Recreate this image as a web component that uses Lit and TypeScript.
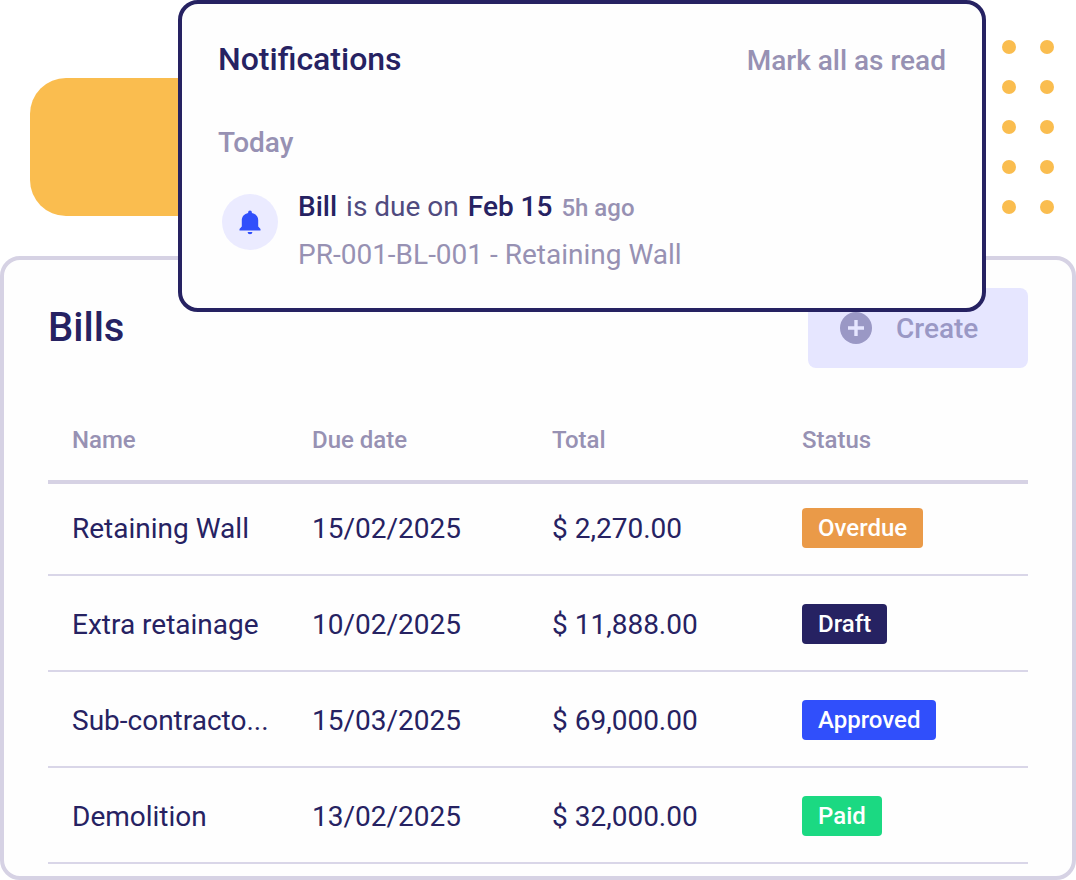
import { LitElement, html, css, svg } from "lit";
import { customElement, property } from "lit/decorators.js";

interface Bill {
  name: string;
  due: string;
  total: string;
  status: "Overdue" | "Draft" | "Approved" | "Paid";
}

const BILLS: Bill[] = [
  { name: "Retaining Wall", due: "15/02/2025", total: "$ 2,270.00", status: "Overdue" },
  { name: "Extra retainage", due: "10/02/2025", total: "$ 11,888.00", status: "Draft" },
  { name: "Sub-contracto...", due: "15/03/2025", total: "$ 69,000.00", status: "Approved" },
  { name: "Demolition", due: "13/02/2025", total: "$ 32,000.00", status: "Paid" },
];

const bell = svg`<path d="M11 0.5a1.9 1.9 0 0 1 1.900 1.900v0.500c3.800 0.800 6.300 3.600 6.300 7.200v6.400l2.300 2.400v1.600H0.500v-1.600L2.800 16.500v-6.400c0-3.600 2.500-6.400 6.300-7.200v-0.500A1.900 1.900 0 0 1 11 0.500zM8.600 22h4.800a2.400 2.200 0 0 1-4.800 0z"/>`;

@customElement("status-badge")
export class StatusBadge extends LitElement {
  @property() status = "";

  static styles = css`
    :host {
      display: inline-block;
      vertical-align: middle;
    }
    .badge {
      display: block;
      padding: 0 16px;
      border-radius: 4px;
      font-size: 24px;
      font-weight: 500;
      line-height: 40px;
      color: #ffffff;
    }
    .overdue { background: #ea9a48; }
    .draft { background: #262262; }
    .approved { background: #304ffb; }
    .paid { background: #1bd982; }
  `;

  render() {
    return html`<span class="badge ${this.status.toLowerCase()}">${this.status}</span>`;
  }
}

@customElement("notification-card")
export class NotificationCard extends LitElement {
  static styles = css`
    :host {
      display: block;
    }
    .card {
      padding: 36px 36px 29px;
      border: 4px solid #262262;
      border-radius: 20px;
      background: #fefefe;
      color: #262262;
      font-size: 28px;
    }
    .head {
      display: flex;
      align-items: baseline;
      justify-content: space-between;
      height: 40px;
      line-height: 38px;
    }
    .title {
      margin: 0;
      font-size: 32px;
      font-weight: 500;
    }
    .mark {
      padding: 0;
      border: 0;
      background: none;
      font: inherit;
      font-weight: 500;
      color: #9791b3;
      cursor: pointer;
    }
    .day {
      margin: 43px 0 20px;
      font-size: 28px;
      font-weight: 500;
      line-height: 40px;
      color: #9791b3;
    }
    .item {
      display: flex;
      gap: 20px;
      padding-left: 4px;
    }
    .icon {
      display: grid;
      place-items: center;
      flex: none;
      width: 56px;
      height: 56px;
      margin-top: 11px;
      border-radius: 50%;
      background: #ebebff;
    }
    .icon svg {
      width: 22px;
      height: 25px;
      fill: #304ffb;
    }
    .line {
      display: flex;
      align-items: baseline;
      gap: 9px;
      height: 48px;
      margin: 0;
      line-height: 48px;
      color: #504b7f;
    }
    .line strong {
      font-weight: 500;
      color: #262262;
    }
    .ago {
      font-size: 24px;
      font-weight: 500;
      line-height: 40px;
      color: #9791b3;
    }
    .ref {
      color: #9791b3;
    }
  `;

  render() {
    return html`
      <section class="card" aria-labelledby="title">
        <header class="head">
          <h2 class="title" id="title">Notifications</h2>
          <button class="mark" type="button">Mark all as read</button>
        </header>
        <h3 class="day">Today</h3>
        <div class="item">
          <span class="icon">
            <svg viewBox="0 0 22 25" aria-hidden="true">${bell}</svg>
          </span>
          <div>
            <p class="line">
              <strong>Bill</strong> is due on <strong>Feb 15</strong>
              <span class="ago">5h ago</span>
            </p>
            <p class="line ref">PR-001-BL-001 - Retaining Wall</p>
          </div>
        </div>
      </section>
    `;
  }
}

@customElement("bills-panel")
export class BillsPanel extends LitElement {
  static styles = css`
    :host {
      display: block;
    }
    .panel {
      padding: 28px 44px 12px;
      border: 4px solid #d6d2e4;
      border-radius: 20px;
      background: #fefefe;
      color: #262262;
    }
    .head {
      display: flex;
      align-items: center;
      justify-content: space-between;
      margin-bottom: 32px;
    }
    .title {
      margin: 0;
      font-size: 40px;
      font-weight: 500;
      line-height: 48px;
    }
    .create {
      display: flex;
      align-items: center;
      gap: 24px;
      min-width: 220px;
      height: 80px;
      padding: 0 48px 0 32px;
      border: 0;
      border-radius: 8px;
      background: #e6e6ff;
      font: inherit;
      font-size: 28px;
      font-weight: 500;
      color: #9a98c5;
      cursor: pointer;
    }
    .create svg {
      width: 32px;
      height: 32px;
    }
    .bills {
      width: 100%;
      table-layout: fixed;
      border-spacing: 0;
      text-align: left;
    }
    .wide {
      width: 250px;
    }
    th,
    td {
      box-sizing: border-box;
      padding: 0 0 0 24px;
      white-space: nowrap;
    }
    th {
      height: 80px;
      font-size: 24px;
      font-weight: 500;
      color: #9791b3;
    }
    td {
      height: 96px;
      font-size: 28px;
      box-shadow: inset 0 -2px #d9d6e8;
    }
    tbody tr:first-child td {
      box-shadow: inset 0 4px #d6d2e4, inset 0 -2px #d9d6e8;
    }
  `;

  render() {
    return html`
      <section class="panel" aria-labelledby="title">
        <header class="head">
          <h1 class="title" id="title">Bills</h1>
          <button class="create" type="button">
            <svg viewBox="0 0 32 32" aria-hidden="true">
              <circle cx="16" cy="16" r="16" fill="#9a98c5" />
              <path d="M16 8v16M8 16h16" stroke="#e6e6ff" stroke-width="3.4" />
            </svg>
            Create
          </button>
        </header>
        <table class="bills">
          <thead>
            <tr>
              <th scope="col">Name</th>
              <th scope="col">Due date</th>
              <th scope="col" class="wide">Total</th>
              <th scope="col" class="wide">Status</th>
            </tr>
          </thead>
          <tbody>
            ${BILLS.map(
              (bill) => html`
                <tr>
                  <td>${bill.name}</td>
                  <td>${bill.due}</td>
                  <td>${bill.total}</td>
                  <td><status-badge status=${bill.status}></status-badge></td>
                </tr>
              `,
            )}
          </tbody>
        </table>
      </section>
    `;
  }
}

@customElement("app-root")
export class AppRoot extends LitElement {
  static styles = css`
    :host {
      display: block;
      background: #ffffff;
      font-family: Roboto, "Liberation Sans", sans-serif;
    }
    .top {
      position: relative;
      z-index: 1;
      display: grid;
      grid-template-columns: 178px minmax(0, 1fr) 90px;
      align-items: start;
      pointer-events: none;
    }
    .block {
      height: 138px;
      margin: 78px -30px 0 30px;
      border-radius: 36px 0 0 36px;
      background: #fabd4f;
    }
    .card {
      position: relative;
      pointer-events: auto;
    }
    .dots {
      display: grid;
      grid-template-columns: 14px 14px;
      gap: 26px 24px;
      padding: 40px 0 0 16px;
    }
    .dot {
      height: 14px;
      border-radius: 50%;
      background: #fabd4f;
    }
    .bills {
      margin-top: -56px;
    }
  `;

  render() {
    return html`
      <div class="top">
        <div class="block"></div>
        <notification-card class="card"></notification-card>
        <div class="dots">${Array.from({ length: 10 }, () => html`<span class="dot"></span>`)}</div>
      </div>
      <bills-panel class="bills"></bills-panel>
    `;
  }
}
